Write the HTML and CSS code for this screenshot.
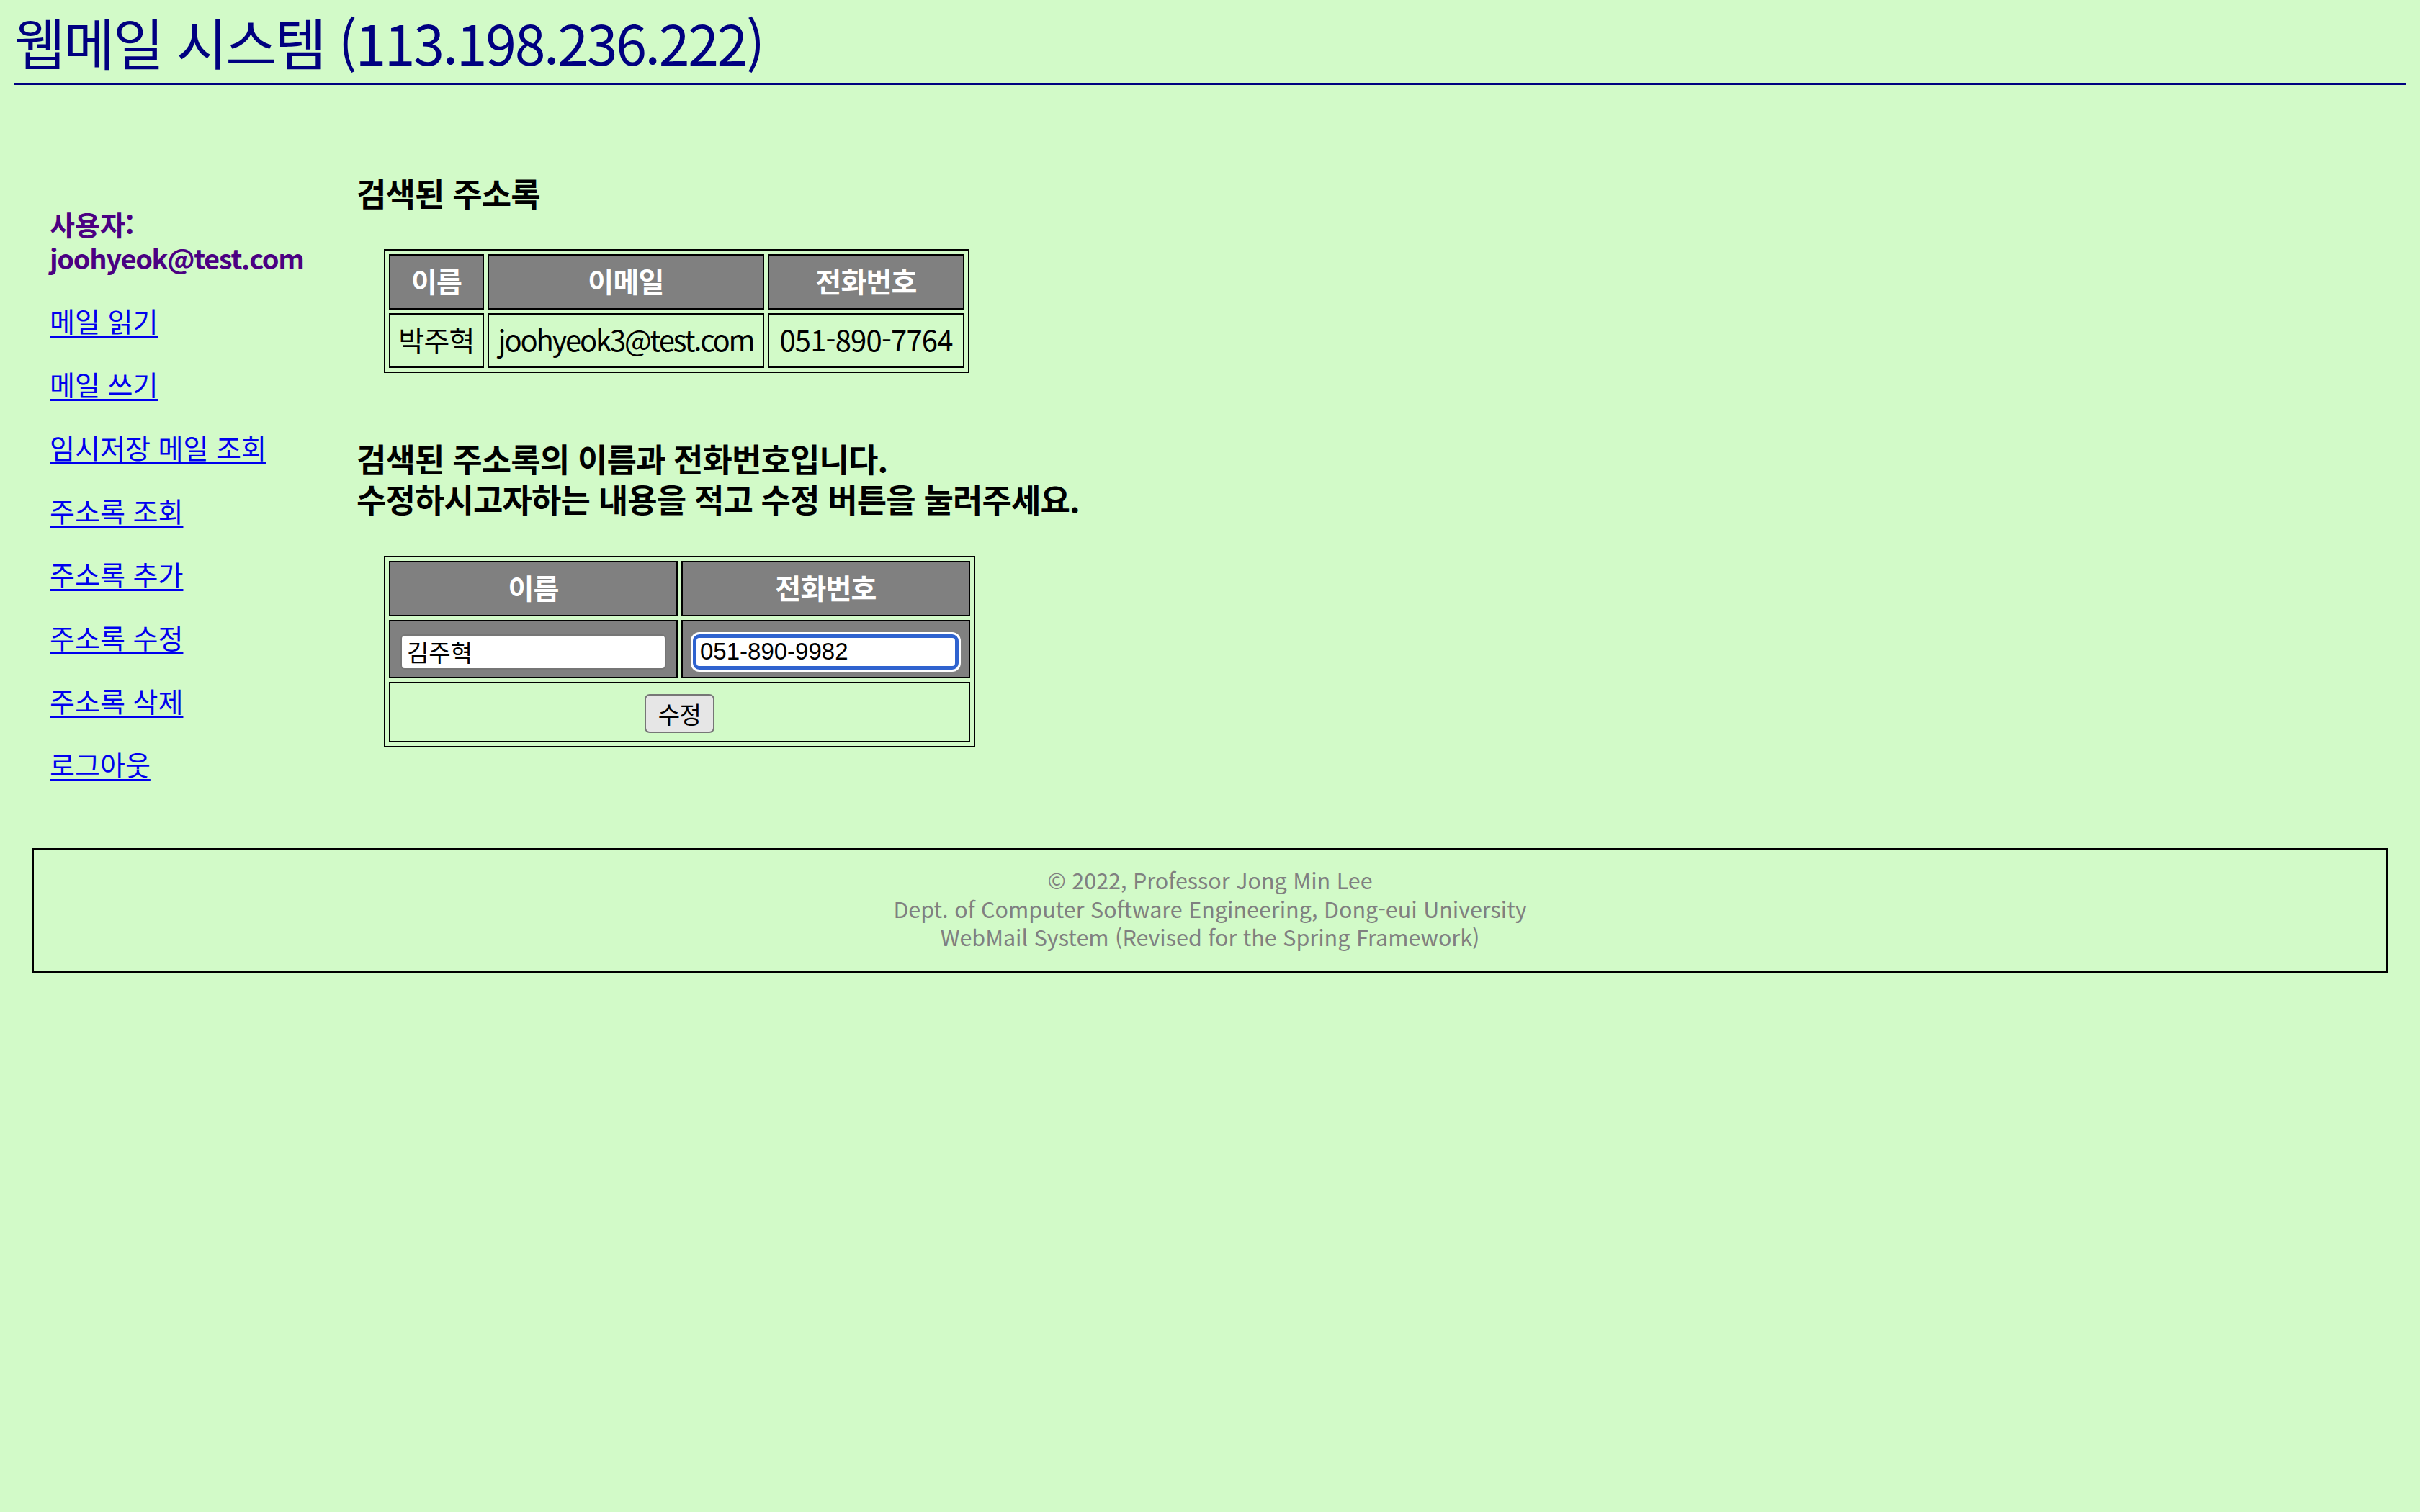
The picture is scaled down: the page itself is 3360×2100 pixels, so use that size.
FILE: index.html
```html
<!DOCTYPE html>
<html lang="ko">
<head>
<meta charset="utf-8">
<title>웹메일 시스템</title>
<link rel="stylesheet" href="styles.css">
</head>
<body>
<div class="site-title">웹메일 시스템 (113.198.236.222)</div>

<div class="layout">
  <nav class="sidebar">
    <p class="user">사용자:<br><span class="user-mail">joohyeok@test.com</span></p>
    <p><a href="#">메일 읽기</a></p>
    <p><a href="#">메일 쓰기</a></p>
    <p><a href="#">임시저장 메일 조회</a></p>
    <p><a href="#">주소록 조회</a></p>
    <p><a href="#">주소록 추가</a></p>
    <p><a href="#">주소록 수정</a></p>
    <p><a href="#">주소록 삭제</a></p>
    <p><a href="#">로그아웃</a></p>
  </nav>

  <main class="main">
    <h3 class="heading first">검색된 주소록</h3>
    <table class="grid result">
      <tr>
        <th class="ko col-name">이름</th>
        <th class="ko col-mail">이메일</th>
        <th class="ko col-phone">전화번호</th>
      </tr>
      <tr>
        <td class="ko">박주혁</td>
        <td class="latin mail">joohyeok3@test.com</td>
        <td class="latin">051-890-7764</td>
      </tr>
    </table>

    <h3 class="heading second">검색된 주소록의 이름과 전화번호입니다.<br>수정하시고자하는 내용을 적고 수정 버튼을 눌러주세요.</h3>

    <form class="edit-form" action="#">
      <table class="grid edit">
        <tr class="head-row">
          <th class="ko col-half">이름</th>
          <th class="ko col-half">전화번호</th>
        </tr>
        <tr class="input-row">
          <td><input class="field" type="text" value="김주혁"></td>
          <td><input class="field focused" type="text" value="051-890-9982"></td>
        </tr>
        <tr class="button-row">
          <td colspan="2"><button class="submit" type="button">수정</button></td>
        </tr>
      </table>
    </form>
  </main>
</div>

<footer class="footer">
  <div>© 2022, Professor Jong Min Lee</div>
  <div>Dept. of Computer Software Engineering, Dong-eui University</div>
  <div>WebMail System (Revised for the Spring Framework)</div>
</footer>
</body>
</html>
```

FILE: styles.css
```css
html, body {
  background: #d2fac8;
}

body {
  margin: 20px;
  font-family: "Noto Sans CJK KR", "Noto Sans", sans-serif;
  font-size: 40px;
  color: #000;
}

.site-title {
  font-size: 77px;
  line-height: 76px;
  letter-spacing: -0.03em;
  color: #000080;
  padding-bottom: 19px;
  border-bottom: 3px solid #000080;
}

.layout {
  display: flex;
  align-items: flex-start;
  margin-top: 76px;
}

.sidebar {
  width: 426px;
  flex: none;
  padding-left: 49px;
  padding-top: 53px;
}

.sidebar p {
  margin: 40px 0;
  line-height: 48px;
  font-size: 38px;
  letter-spacing: 0;
}

.sidebar p.user {
  font-weight: bold;
  color: #4b0082;
  line-height: 47px;
}

.user-mail {
  font-size: 38px;
  letter-spacing: -0.035em;
}

.sidebar a {
  color: #0000ee;
  text-decoration: underline;
  text-underline-offset: 5px;
  text-decoration-thickness: 3px;
}

.main {
  flex: 1;
}

.heading {
  font-size: 45px;
  line-height: 56px;
  letter-spacing: -0.02em;
  font-weight: bold;
}

.heading.first {
  margin: 46px 0 50px;
}

.heading.second {
  margin: 91px 0 51px;
}

.grid {
  margin-left: 38px;
  border: 2px solid #000;
  border-spacing: 5px;
  table-layout: fixed;
  box-sizing: border-box;
}

.grid th,
.grid td {
  box-sizing: border-box;
  border: 2px solid #000;
  padding: 0 0 5px;
  text-align: center;
  vertical-align: middle;
  white-space: nowrap;
}

.grid th {
  background: #808080;
  color: #fff;
  font-weight: bold;
}

.ko {
  font-size: 39px;
  letter-spacing: -0.02em;
}

.latin {
  font-size: 40px;
  letter-spacing: -0.02em;
}

.latin.mail {
  letter-spacing: -0.055em;
}

.result {
  width: 813px;
}

.result th {
  height: 77px;
}

.result td {
  height: 76px;
}

.col-name {
  width: 132px;
}

.col-mail {
  width: 384px;
}

.col-phone {
  width: 273px;
}

.edit-form {
  margin: 0;
}

.edit {
  width: 821px;
}

.col-half {
  width: 401px;
}

.edit .head-row th {
  height: 77px;
}

.edit .input-row td {
  height: 81px;
  padding: 0 0 3px;
  background: #808080;
}

.edit .button-row td {
  height: 84px;
  padding: 0 0 5px;
}

.field {
  box-sizing: border-box;
  width: 369px;
  height: 49px;
  margin: 0;
  padding: 0 7px;
  font-family: "Liberation Sans", "Noto Sans CJK KR", sans-serif;
  font-size: 33px;
  color: #000;
  background: #fff;
  border: 2px solid #767676;
  border-radius: 6px;
  outline: none;
  vertical-align: middle;
}

.field.focused {
  border: 5px solid #2f63cf;
  border-radius: 9px;
  padding: 0 5px;
  box-shadow: 0 0 0 3px #fff;
}

.submit {
  box-sizing: border-box;
  width: 97px;
  height: 54px;
  margin: 0;
  padding: 0;
  font-family: "Noto Sans CJK KR", sans-serif;
  font-size: 33px;
  letter-spacing: -0.02em;
  color: #000;
  background: #e6e6e6;
  border: 2px solid #767676;
  border-radius: 7px;
  vertical-align: middle;
}

.footer {
  margin: 53px 25px 0;
  border: 2px solid #000;
  padding: 23px 0 27px;
  text-align: center;
  color: #808080;
  font-size: 30.5px;
  line-height: 39.5px;
}
```
